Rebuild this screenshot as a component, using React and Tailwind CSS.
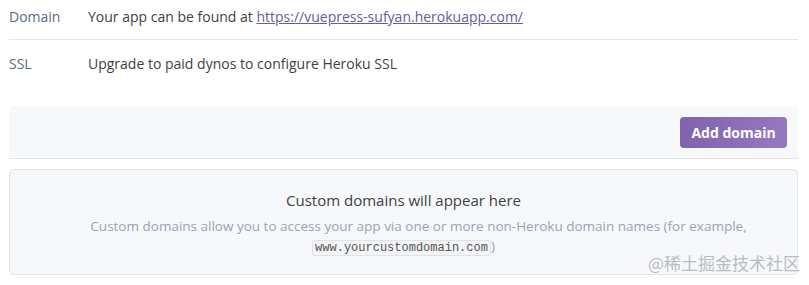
export default function App() {
  return (
    <div className="w-[809px] h-[285px] bg-white relative overflow-hidden" style={{ fontFamily: '"Open Sans", "Noto Sans", sans-serif' }}>
      <div className="pl-[9px] pr-[11px]">
        <div className="flex items-center h-[40px] border-b border-[#e3e5e9] text-[14px] text-[#3f3f44] pb-[6px]">
          <div className="w-[79px] text-[#596981]">Domain</div>
          <div>
            Your app can be found at{" "}
            <a className="underline text-[#6a5a9a] decoration-[#6a5a9a]" href="#">https://vuepress-sufyan.herokuapp.com/</a>
          </div>
        </div>
        <div className="flex items-center h-[46px] text-[14px] text-[#3f3f44]">
          <div className="w-[79px] text-[#596981]">SSL</div>
          <div>Upgrade to paid dynos to configure Heroku SSL</div>
        </div>
        <div className="mt-[20px] h-[53px] bg-[#f7f8fa] rounded-t-[5px] border-b border-[#e0e3e7] flex items-center justify-end pr-[11px]">
          <button className="w-[107px] h-[31px] rounded-[4px] bg-gradient-to-r from-[#7f63ae] to-[#9479c0] text-white text-[14px] font-bold">Add domain</button>
        </div>
        <div className="mt-[10px] h-[106px] bg-[#f7f8fb] border border-[#e1e4e8] rounded-[5px] flex flex-col items-center pt-[19px]">
          <div className="text-[15px] text-[#3f3f44] leading-[22px]">Custom domains will appear here</div>
          <div className="mt-[5px] text-[13.5px] text-[#9aa3b3] text-center leading-[20px]">
            <div className="pl-[30px]">Custom domains allow you to access your app via one or more non-Heroku domain names (for example,</div>
            <div>
              <code className="text-[12px] text-[#555] bg-[#f3f4f6] border border-[#dfe2e6] rounded-[3px] px-[2px]" style={{ fontFamily: '"Liberation Mono", monospace' }}>www.yourcustomdomain.com</code>)
            </div>
          </div>
        </div>
      </div>
      <div className="absolute right-[9px] top-[250px] text-[17px] text-[#b8bcc2]" style={{ fontFamily: '"Noto Sans CJK SC", serif' }}>@稀土掘金技术社区</div>
    </div>
  );
}
